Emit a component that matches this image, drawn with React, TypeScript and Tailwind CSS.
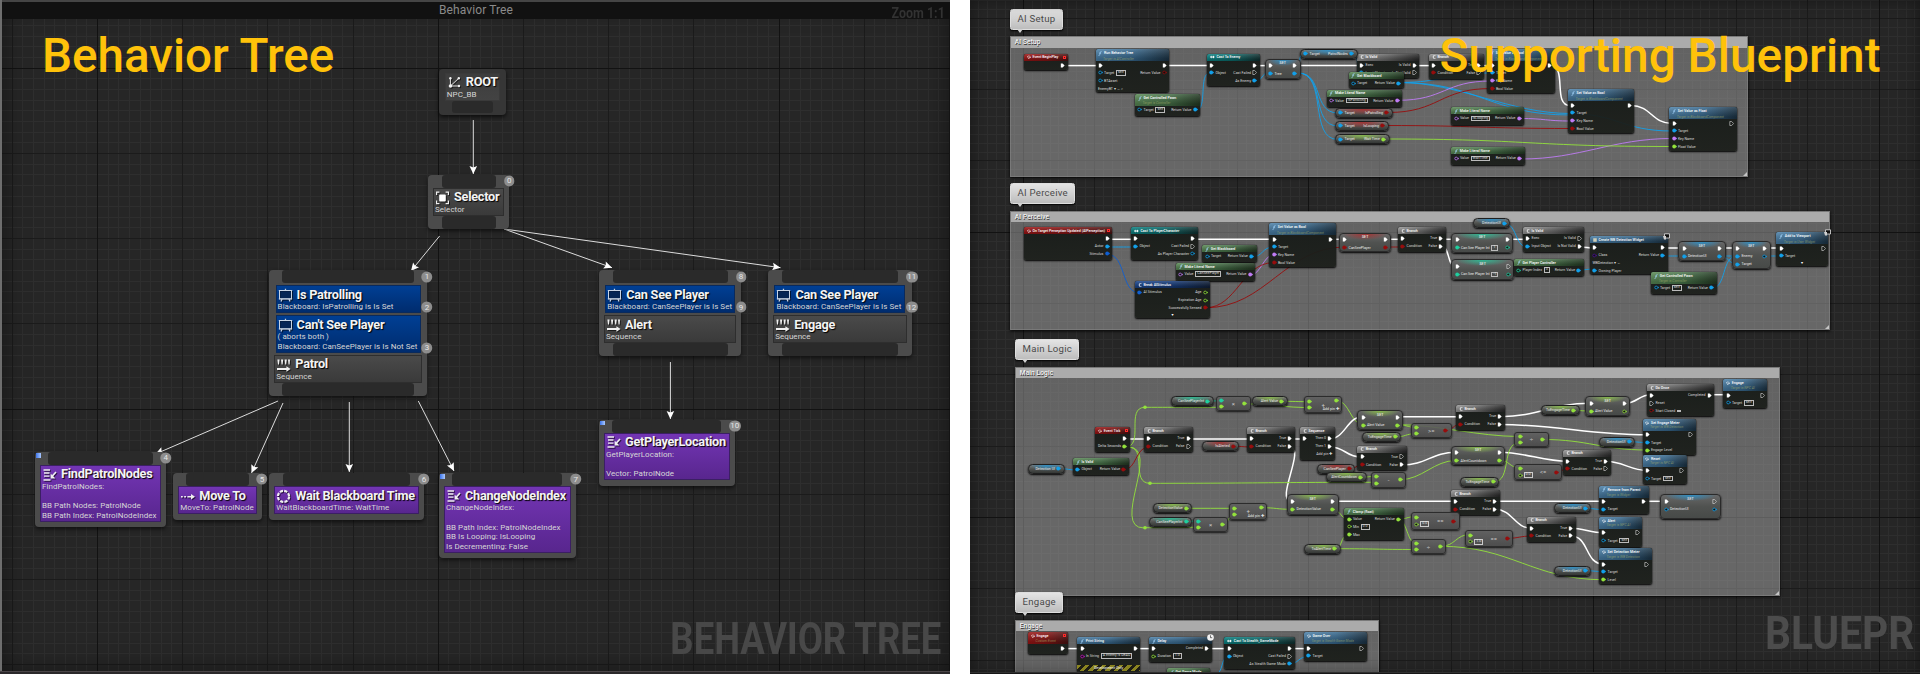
import React from "react";

/* ------------------------------------------------------------------ */
/* Canvas grid                                                         */
/* ------------------------------------------------------------------ */

type GridProps = { w: number; h: number; x0: number; y0: number; step: number; strong: number };

function Grid({ w, h, x0, y0, step, strong }: GridProps) {
  const minor: string[] = [];
  const major: string[] = [];
  const axis: string[] = [];
  const place = (n: number, d: string) => {
    if (n % (strong * 8) === 0) axis.push(d);
    else if (n % 8 === 0) major.push(d);
    else minor.push(d);
  };
  for (let n = -Math.floor(x0 / step); x0 + n * step < w; n++) {
    place(n, `M${Math.floor(x0 + n * step) + 0.5} 0V${h}`);
  }
  for (let n = -Math.floor(y0 / step); y0 + n * step < h; n++) {
    place(n, `M0 ${Math.floor(y0 + n * step) + 0.5}H${w}`);
  }
  return (
    <svg className="absolute inset-0" width={w} height={h} fill="none">
      <path d={minor.join("")} stroke="#2e2e2e" />
      <path d={major.join("")} stroke="#1b1b1b" />
      <path d={axis.join("")} stroke="#121212" />
    </svg>
  );
}

/* ------------------------------------------------------------------ */
/* Behavior tree                                                       */
/* ------------------------------------------------------------------ */

type IconName = "root" | "selector" | "board" | "sequence" | "task" | "move" | "wait";

function TreeIcon({ name }: { name: IconName }) {
  const box = "h-[15px] w-[15px] shrink-0 overflow-visible drop-shadow-[1px_1px_0px_rgba(0,0,0,0.6)]";
  switch (name) {
    case "root":
      return (
        <svg className={box} viewBox="0 0 15 15" fill="none" stroke="#f0f0f0" strokeWidth="0.9">
          <path d="M3.4 4.4V12H11.6M3.4 12L11.6 4.4" />
          <circle cx="3.5" cy="12" r="1.8" fill="#f0f0f0" stroke="none" />
          <circle cx="3.4" cy="4.2" r="1.2" fill="#f0f0f0" stroke="none" />
          <circle cx="11.8" cy="4.2" r="1.2" fill="#f0f0f0" stroke="none" />
          <circle cx="12" cy="12" r="1.2" fill="#f0f0f0" stroke="none" />
        </svg>
      );
    case "selector":
      return (
        <svg className={box} viewBox="0 0 15 15" fill="none" stroke="#f0f0f0" strokeWidth="1.2">
          <path d="M1.6 5V2.2H4.4M10.6 2.2H13.4V5M13.4 10.6V13.6H10.6M4.4 13.6H1.6V10.6" />
          <rect x="4.2" y="4.4" width="6.6" height="7" rx="1" fill="#fff" stroke="none" />
        </svg>
      );
    case "board":
      return (
        <svg className={box} viewBox="0 0 15 15" fill="none" stroke="#c9d4e4" strokeWidth="1">
          <rect x="1.5" y="3.5" width="12" height="8.4" fill="#0a2450" fillOpacity="0.55" />
          <path d="M7.5 1.8V3.5M4 12L3 14.4M11 12L12 14.4" strokeWidth="1.3" />
          <path d="M0.8 3.5H14.2M0.8 11.9H14.2" />
        </svg>
      );
    case "sequence":
      return (
        <svg className={box} viewBox="0 0 15 15" fill="#f0f0f0">
          <path d="M1.4 2.6H3.6L3 7.4H2ZM5 2.6H7.2L6.6 7.4H5.6ZM8.6 2.6H10.8L10.2 7.4H9.2ZM12 2.6H14L13.6 7.4H12.6Z" />
          <path d="M1 11H10.4V9.2L14.6 12L10.4 14.8V13H1Z" />
        </svg>
      );
    case "task":
      return (
        <svg className={box} viewBox="0 0 15 15" fill="none" stroke="#f0f0f0" strokeWidth="1.3">
          <path d="M1.5 3H8M2 6H7.5M2 9.2H7.5M1.5 13H8.5" />
          <path d="M14 5L10.4 9" strokeWidth="1.6" />
          <path d="M8.6 6.4V11.6H13.4Z" fill="#f0f0f0" stroke="none" />
        </svg>
      );
    case "move":
      return (
        <svg className={box} viewBox="0 0 15 15" fill="#f0f0f0">
          <path d="M1 7.9H2.8V9.5H1ZM4.2 7.9H6V9.5H4.2ZM7.4 7.9H11V6L15 8.7L11 11.4V9.5H7.4Z" />
        </svg>
      );
    case "wait":
      return (
        <svg className={box} viewBox="0 0 15 15" fill="none" stroke="#f0f0f0">
          <circle cx="7.5" cy="8.4" r="5.6" strokeWidth="2.2" strokeDasharray="3.2 1.2" />
        </svg>
      );
  }
}

type Block = { kind: "deco" | "comp" | "task" | "root"; icon: IconName; title: string; lines: string[] };
type TreeNodeData = {
  x: number;
  y: number;
  w: number;
  tab: number;
  blocks: Block[];
  badges?: [number, string][];
  leaf?: boolean;
};

const blockStyle = {
  deco: "mx-[6.3px] mb-[2.2px] border-[#0a2a5c] bg-linear-to-b from-[#003f94] to-[#002c6e]",
  comp: "mx-[5px] border-[#2e2e2e] bg-linear-to-b from-[#4a4a4a] to-[#3a3a3a]",
  task: "mx-[5px] border-[#3b1f63] bg-linear-to-b from-[#7335b4] to-[#58268e]",
  root: "mx-[5.5px] mt-[3.5px] border-[#3a3a3a] bg-linear-to-b from-[#3d3d3d] to-[#434343]",
};

function TreeNode({ x, y, w, tab, blocks, badges = [], leaf }: TreeNodeData) {
  const root = blocks[0].kind === "root";
  const deco = blocks[0].kind === "deco";
  return (
    <div
      className={
        root
          ? "absolute flex flex-col items-stretch rounded-[4px] bg-[#363636] pb-[1.5px] shadow-[0_2px_4px_rgba(0,0,0,0.7)]"
          : "absolute flex flex-col items-stretch rounded-[4px] bg-[#4b4b4b] shadow-[0_2px_4px_rgba(0,0,0,0.6)]"
      }
      style={{ left: x, top: y, width: w, paddingBottom: leaf ? 5.4 : undefined }}
    >
      {!root && (
        <div
          className={`h-[13px] self-center rounded-[3px] bg-[#2a2a2a] ${deco ? "mb-[2px]" : "mb-[0.2px]"}`}
          style={{ width: tab }}
        />
      )}
      {blocks.map((b) => (
        <div key={b.title} className={`border pb-[0.4px] ${blockStyle[b.kind]}`}>
          <div className="flex h-[16px] items-center gap-[4px] pl-[1px]">
            <TreeIcon name={b.icon} />
            <span className="-mt-[0.5px] text-[12.7px] leading-[15px] font-bold tracking-[-0.26px] whitespace-nowrap text-[#f4f4f4] [text-shadow:1px_1px_1px_#000]">
              {b.title}
            </span>
          </div>
          {b.lines.map((l, i) => (
            <div key={i} className="h-[9.6px] pl-px text-[8px] leading-[9.6px] tracking-[0.05px] whitespace-pre text-[#d6d6d6]">
              {l}
            </div>
          ))}
        </div>
      ))}
      {!leaf && <div className="h-[12.6px] self-center rounded-[3px] bg-[#2a2a2a]" style={{ width: tab }} />}
      {leaf && blocks[0].icon === "task" && (
        <div className="absolute top-[1px] left-[1px] h-[4.5px] w-[5px] bg-linear-to-r from-[#3f74e8] to-[#a9c8ff]" />
      )}
      {badges.map(([dy, n]) => (
        <div
          key={n}
          className="absolute flex h-[11px] min-w-[10.5px] translate-x-1/2 -translate-y-1/2 items-center justify-center rounded-full bg-[#8d8d8d] px-[1.5px] text-[8px] leading-none text-[#e6e6e6]"
          style={{ right: 0, top: dy }}
        >
          {n}
        </div>
      ))}
    </div>
  );
}

const treeNodes: TreeNodeData[] = [
  { x: 439.3, y: 69.3, w: 66.7, tab: 41.6, blocks: [{ kind: "root", icon: "root", title: "ROOT", lines: ["NPC_BB"] }] },
  {
    x: 428, y: 175, w: 81.3, tab: 54.3, badges: [[5.7, "0"]],
    blocks: [{ kind: "comp", icon: "selector", title: "Selector", lines: ["Selector"] }],
  },
  {
    x: 269.3, y: 270.3, w: 157.7, tab: 131.3, badges: [[6.4, "1"], [37, "2"], [77.7, "3"]],
    blocks: [
      { kind: "deco", icon: "board", title: "Is Patrolling", lines: ["Blackboard: IsPatrolling is Is Set"] },
      { kind: "deco", icon: "board", title: "Can't See Player", lines: ["( aborts both )", "Blackboard: CanSeePlayer is Is Not Set"] },
      { kind: "comp", icon: "sequence", title: "Patrol", lines: ["Sequence"] },
    ],
  },
  {
    x: 599, y: 270.3, w: 142, tab: 115, badges: [[6.4, "8"], [37, "9"]],
    blocks: [
      { kind: "deco", icon: "board", title: "Can See Player", lines: ["Blackboard: CanSeePlayer is Is Set"] },
      { kind: "comp", icon: "sequence", title: "Alert", lines: ["Sequence"] },
    ],
  },
  {
    x: 768.2, y: 270.3, w: 143.5, tab: 116, badges: [[6.4, "11"], [37, "12"]],
    blocks: [
      { kind: "deco", icon: "board", title: "Can See Player", lines: ["Blackboard: CanSeePlayer is Is Set"] },
      { kind: "comp", icon: "sequence", title: "Engage", lines: ["Sequence"] },
    ],
  },
  {
    x: 35, y: 452, w: 130.8, tab: 105.3, leaf: true, badges: [[5.8, "4"]],
    blocks: [{ kind: "task", icon: "task", title: "FindPatrolNodes", lines: ["FindPatrolNodes:", " ", "BB Path Nodes: PatrolNode", "BB Path Index: PatrolNodeIndex"] }],
  },
  {
    x: 173.3, y: 473.3, w: 88.7, tab: 62.6, leaf: true, badges: [[5.8, "5"]],
    blocks: [{ kind: "task", icon: "move", title: "Move To", lines: ["MoveTo: PatrolNode"] }],
  },
  {
    x: 269.3, y: 473.3, w: 154.7, tab: 127.7, leaf: true, badges: [[5.8, "6"]],
    blocks: [{ kind: "task", icon: "wait", title: "Wait Blackboard Time", lines: ["WaitBlackboardTime: WaitTime"] }],
  },
  {
    x: 439, y: 473.3, w: 136.7, tab: 110, leaf: true, badges: [[5.8, "7"]],
    blocks: [{ kind: "task", icon: "task", title: "ChangeNodeIndex", lines: ["ChangeNodeIndex:", " ", "BB Path Index: PatrolNodeIndex", "BB Is Looping: IsLooping", "Is Decrementing: False"] }],
  },
  {
    x: 599, y: 419.8, w: 135.7, tab: 109, leaf: true, badges: [[6, "10"]],
    blocks: [{ kind: "task", icon: "task", title: "GetPlayerLocation", lines: ["GetPlayerLocation:", " ", "Vector: PatrolNode"] }],
  },
];

const treeLinks: [number, number, number, number][] = [
  [473.3, 120, 473.3, 174],
  [439.6, 236, 411, 271],
  [504, 229, 612, 267.7],
  [504, 229, 780.5, 267.7],
  [278, 401, 155.5, 454],
  [283, 403, 251.5, 473],
  [349.3, 402, 349.3, 472],
  [418.3, 401, 454, 471],
  [670.4, 362, 670.4, 419],
];

function BehaviorTreePanel() {
  return (
    <section className="relative h-[674px] w-[950px] shrink-0 overflow-hidden bg-[#262626]">
      <Grid w={950} h={674} x0={438.2} y0={68.2} step={10.65} strong={4} />
      <div className="absolute inset-0 shadow-[inset_0_0_28px_rgba(0,0,0,0.5)]" />
      <header className="relative flex h-[19px] justify-center border-t-2 border-[#454545] bg-[#111111] text-[12px] leading-[17px] text-[#8a8a8a]">
        <span className="pl-[2px] tracking-[0.1px]">Behavior Tree</span>
      </header>
      <div className="absolute top-[4px] right-[5px] origin-right scale-x-[0.89] text-[14px] leading-[19px] font-bold text-[#323232]">
        Zoom 1:1
      </div>
      <div className="absolute right-[9px] bottom-[4px] origin-right scale-x-[0.838] text-[43.5px] leading-[60px] font-bold whitespace-nowrap text-[#484848]">
        BEHAVIOR TREE
      </div>
      <svg className="absolute inset-0" width="950" height="674">
        {treeLinks.map(([x1, y1, x2, y2]) => {
          const a = (Math.atan2(y2 - y1, x2 - x1) * 180) / Math.PI;
          return (
            <g key={`${x1}-${x2}-${y2}`}>
              <line x1={x1} y1={y1} x2={x2} y2={y2} stroke="#dcdcdc" strokeWidth="1" />
              <path d="M0 0L-8 -3.8L-6.6 0L-8 3.8Z" fill="#fff" transform={`translate(${x2} ${y2}) rotate(${a})`} />
            </g>
          );
        })}
      </svg>
      {treeNodes.map((n) => (
        <TreeNode key={`${n.x}-${n.y}`} {...n} />
      ))}
      <h1 className="absolute top-[28px] left-[42px] text-[47.6px] leading-[56px] font-medium whitespace-nowrap text-[#ffc20a]">
        Behavior Tree
      </h1>
      <div className="absolute inset-y-0 left-0 w-[2px] bg-[#6e6e6e]" />
      <div className="absolute inset-x-0 bottom-0 h-[3px] border-t border-[#4a4548] bg-[#2a282a]" />
    </section>
  );
}

/* ------------------------------------------------------------------ */
/* Blueprint graph                                                     */
/* ------------------------------------------------------------------ */

const pinColor: Record<string, string> = {
  B: "#12a0ea",
  R: "#960d0d",
  G: "#93e23c",
  P: "#c07cf5",
  T: "#1fcf9f",
  D: "#0f5fd2",
  V: "#4b1196",
  M: "#c414c0",
};

/** One letter per pin type; upper case is connected, lower case is free. X is execution. */
function Pin({ code }: { code: string }) {
  const up = code.toUpperCase();
  const on = code === up;
  if (!code) return null;
  if (up === "X") {
    return (
      <svg className="h-[5px] w-[5px] shrink-0" viewBox="0 0 5 5">
        <path d="M0.8 0.5H2.6L4.6 2.5L2.6 4.5H0.8Z" fill={on ? "#fff" : "none"} stroke={on ? "none" : "#ddd"} strokeWidth="0.6" />
      </svg>
    );
  }
  const c = pinColor[up];
  return (
    <svg className="h-[5px] w-[5px] shrink-0" viewBox="0 0 5 5">
      <circle cx="2.2" cy="2.5" r={on ? 1.9 : 1.4} fill={on ? c : "#111"} stroke={on ? "none" : c} strokeWidth="0.8" />
      <path d="M4 1.6L5 2.5L4 3.4Z" fill={c} />
    </svg>
  );
}

type Tone = "blue" | "red" | "green" | "teal" | "gray" | "navy";
type Kind = "fn" | "set" | "var" | "op";
type BpNode = [kind: Kind, x: number, y: number, w: number, h: number, tone: Tone, title: string, sub: string, rows: string[]];

const headTone: Record<Tone, string> = {
  blue: "from-[#4c82ab] via-[#386a90] to-[#1c3446]",
  red: "from-[#a01515] via-[#861414] to-[#4a1212]",
  green: "from-[#5b8c57] via-[#48754a] to-[#243a24]",
  teal: "from-[#0b8585] via-[#0a6c6c] to-[#0f3030]",
  gray: "from-[#9a9a9a] via-[#666666] to-[#2a2a2a]",
  navy: "from-[#1b478f] via-[#153a7a] to-[#101f38]",
};

const glowTone: Record<Tone, string> = {
  blue: "from-[#2f8fc4]",
  red: "from-[#a33232]",
  green: "from-[#86b84c]",
  teal: "from-[#2fb892]",
  gray: "from-[#888888]",
  navy: "from-[#1b478f]",
};

function Row({ spec }: { spec: string }) {
  const [lp = "", lt = "", box = "", rp = "", rt = ""] = spec.split("|");
  return (
    <div className="flex h-[7.8px] items-center justify-between px-[2.4px]">
      <div className="flex items-center gap-[1.2px]">
        <Pin code={lp} />
        <span>{lt}</span>
        {box && <span className="ml-[0.5px] border-[0.5px] border-[#bbb] px-[1px] leading-[3.6px]">{box}</span>}
      </div>
      <div className="flex items-center gap-[1.2px]">
        <span>{rt}</span>
        <Pin code={rp} />
      </div>
    </div>
  );
}

function Node({ n }: { n: BpNode }) {
  const [kind, x, y, w, h, tone, title, sub, rows] = n;
  const pos = { left: x, top: y, width: w, height: h };
  if (kind === "fn") {
    return (
      <div
        className="absolute overflow-hidden rounded-[2px] bg-linear-to-b from-[#161a17]/95 to-[#1c1f1b]/95 text-[3.6px] leading-[4px] whitespace-nowrap text-[#dcdcdc] shadow-[0_1px_2px_#000,0_0_1px_#000]"
        style={pos}
      >
        <div className={`bg-linear-to-r ${headTone[tone]} ${sub ? "h-[12px]" : "h-[7.2px]"}`}>
          <div className={`h-full bg-linear-to-b from-white/15 to-black/25 pr-[2px] pl-[2.5px] ${sub ? "pt-[1.6px]" : "pt-[1.4px]"}`}>
            <div className="flex items-center gap-[2px] text-[3.6px] font-medium text-white">
              <HeadGlyph tone={tone} title={title} />
              <span className="grow">{title}</span>
              {tone === "red" && <span className="h-[3px] w-[3px] border-[0.8px] border-[#ff2a2a]" />}
            </div>
            {sub && <div className="pt-[0.8px] pl-[5px] text-[3.4px] font-normal text-[#a5b06e]/70 italic">{sub}</div>}
          </div>
        </div>
        {rows.map((r, i) =>
          r === "v" ? (
            <div key={i} className="pt-[1px] text-center text-[3.6px] leading-[4px] text-white">▼</div>
          ) : r === "!" ? (
            <div
              key={i}
              className="mt-[5px] flex h-[6px] items-center justify-center bg-[repeating-linear-gradient(135deg,#8a8420_0_3px,#1c1c14_3px_6px)] text-white"
            >
              Development Only
            </div>
          ) : (
            <Row key={i} spec={r} />
          ),
        )}
      </div>
    );
  }
  if (kind === "set") {
    return (
      <div
        className="absolute overflow-hidden rounded-[4px] border-[0.7px] border-[#2a2a2a] bg-linear-to-b from-[#686868] via-[#505250] to-[#474a48] pt-[2.4px] text-[3.6px] leading-[4px] whitespace-nowrap text-[#eaeaea] shadow-[0_1px_2px_#000]"
        style={pos}
      >
        <div className={`absolute inset-x-0 top-0 h-[6px] bg-radial-[ellipse_44%_100%_at_50%_0%] ${glowTone[tone]} to-transparent`} />
        <div className="absolute inset-x-0 top-[1.6px] text-center text-[3.6px] font-medium">{title}</div>
        <div className="relative">
          {rows.map((r, i) => (
            <Row key={i} spec={r} />
          ))}
        </div>
      </div>
    );
  }
  if (kind === "var") {
    return (
      <div
        className="absolute flex flex-col justify-center overflow-hidden rounded-[4.5px] border-[0.7px] border-[#1f1f1f] bg-linear-to-b from-[#787878] via-[#50524f] to-[#343735] text-[3.6px] leading-[4px] whitespace-nowrap text-[#eaeaea] shadow-[0_1px_2px_#000]"
        style={pos}
      >
        <div className={`absolute inset-x-0 top-0 h-[6px] bg-radial-[ellipse_48%_100%_at_50%_0%] ${glowTone[tone]} to-transparent`} />
        <div className="relative">
          <Row spec={rows[0]} />
        </div>
      </div>
    );
  }
  return (
    <div
      className="absolute flex justify-between rounded-[3px] border-[0.7px] border-[#2c2c2c] bg-linear-to-b from-[#606060]/90 to-[#4a4a4a]/90 px-[2.2px] text-[3.6px] leading-[4px] text-[#eaeaea] shadow-[0_1px_2px_rgba(0,0,0,0.8)]"
      style={pos}
    >
      <div className="flex flex-col justify-center gap-[1.3px]">
        {rows[0].split(",").map((p, i) => (
          <div key={i} className="flex items-center gap-[1px]">
            <Pin code={p[0]} />
            {p.length > 1 && <span className="border-[0.5px] border-[#ccc] px-[1px] leading-[3.6px]">{p.slice(1)}</span>}
          </div>
        ))}
      </div>
      <div className="flex items-center text-[6px] leading-none text-[#ccc]">{title}</div>
      <div className={`flex flex-col items-end ${sub ? "justify-between py-[1px]" : "justify-center"}`}>
        <Pin code={rows[1]} />
        {sub && <div className="-ml-[14px] whitespace-nowrap">{sub}</div>}
      </div>
    </div>
  );
}

function HeadGlyph({ tone, title }: { tone: Tone; title: string }) {
  if (tone === "red" || ["Engage", "Reset", "Alert", "Game Over", "Set Engage Meter", "Set Detection Meter"].includes(title)) {
    return (
      <svg className="h-[4px] w-[4px]" viewBox="0 0 8 8" fill="none" stroke="#fff" strokeWidth="1.4">
        <path d="M4 0.8L0.8 4L4 7.2L7.2 4M4 4H7.5" />
      </svg>
    );
  }
  if (tone === "teal") {
    return (
      <svg className="h-[4px] w-[5px]" viewBox="0 0 10 8" fill="#fff">
        <path d="M0 3H3V1L6 4L3 7V5H0ZM6 1L9.5 4L6 7Z" />
      </svg>
    );
  }
  if (title.startsWith("Create")) {
    return (
      <svg className="h-[4px] w-[4px]" viewBox="0 0 8 8">
        <path d="M0.5 0.5H7.5V7.5H0.5Z" fill="#cfcfb8" />
      </svg>
    );
  }
  if (tone === "gray" || tone === "navy") {
    return (
      <svg className="h-[4px] w-[4px]" viewBox="0 0 8 8" fill="none" stroke="#fff" strokeWidth="1.2">
        <path d="M1 4H3M3 1.2V6.8M3 1.2H7M3 6.8H7" />
      </svg>
    );
  }
  return (
    <svg className="h-[5px] w-[4px]" viewBox="0 0 8 10" fill="none" stroke="#a8d8ff" strokeWidth="1.4">
      <path d="M7 1.2C5.4 0.6 4.8 1.6 4.5 3L3.4 7.4C3.1 8.8 2.4 9.4 1 8.8M2.4 4.2H6.2" />
    </svg>
  );
}

const TB = "Target is BlackboardComponent";
const pill = (x: number, y: number, w: number, tone: Tone, pin: string, name: string, l = "|"): BpNode => [
  "var", x, y, w, 10, tone, "", "", [`${l}||${pin}|${name}`],
];
const branch = (x: number, y: number, w: number, t = "X", f = "X", name = "Branch"): BpNode => [
  "fn", x, y, w, 24.5, "gray", name, "", [`X|||${t}|True`, `R|Condition||${f}|False`],
];

const nodes: BpNode[] = [
  /* AI Setup */
  ["fn", 1024, 54, 43.5, 16, "red", "Event BeginPlay", "", ["|||X|"]],
  ["fn", 1095.5, 49.3, 73.5, 42.5, "blue", "Run Behavior Tree", "Target is AIController", ["X|||X|", "b|Target|self|r|Return Value", "b|BTAsset|||", "|     EnemyBT ▾   ← ⌕|||"]],
  ["fn", 1135, 94, 65, 22, "green", "Get Controlled Pawn", "Target is Controller", ["b|Target|self|B|Return Value"]],
  ["fn", 1207, 54, 52.7, 32, "teal", "Cast To Enemy", "", ["X|||X|", "B|Object||x|Cast Failed", "|||B|As Enemy"]],
  ["set", 1265, 58.5, 35.5, 20, "blue", "SET", "", ["X|||X|", "B|Tree||B|"]],
  ["fn", 1357, 54, 62, 24, "gray", "Is Valid", "", ["X|Exec||X|Is Valid", "B|Input Object||x|Is Not Valid"]],
  pill(1300, 49, 57.5, "blue", "B", "PatrolNodes", "B|Target"),
  ["fn", 1348.5, 72, 55, 15.7, "green", "Get Blackboard", "", ["b|Target||B|Return Value"]],
  ["fn", 1326.5, 89.5, 75.5, 17.5, "green", "Make Literal Name", "", ["p|Value|IsPatrolling|P|Return Value"]],
  pill(1335, 107.7, 57.7, "red", "R", "IsPatrolling", "B|Target"),
  pill(1335, 120.7, 53.7, "red", "R", "IsLooping", "B|Target"),
  pill(1335, 134.4, 54.5, "green", "G", "Wait Time", "B|Target"),
  branch(1429, 54, 54.7, "X", "x"),
  ["fn", 1487.3, 49.3, 67.5, 43.7, "blue", "Set Value as Bool", TB, ["X|||X|", "B|Target", "P|Key Name", "R|Bool Value"]],
  ["fn", 1568, 89.3, 66, 43.7, "blue", "Set Value as Bool", TB, ["X|||X|", "B|Target", "P|Key Name", "R|Bool Value"]],
  ["fn", 1669.3, 107.3, 67.5, 43.7, "blue", "Set Value as Float", TB, ["X|||x|", "B|Target", "P|Key Name", "G|Float Value"]],
  ["fn", 1451.3, 107.3, 72.7, 17.5, "green", "Make Literal Name", "", ["p|Value|IsLooping|P|Return Value"]],
  ["fn", 1451.3, 147.3, 73.3, 17.5, "green", "Make Literal Name", "", ["p|Value|WaitTime|P|Return Value"]],

  /* AI Perceive */
  ["fn", 1024, 227.3, 88, 32.3, "red", "On Target Perception Updated (AIPerception)", "", ["|||X|", "|||B|Actor", "|||D|Stimulus"]],
  ["fn", 1131, 227.3, 66.7, 32.3, "teal", "Cast To PlayerCharacter", "", ["X|||X|", "B|Object||x|Cast Failed", "|||b|As Player Character"]],
  ["fn", 1202.3, 245.3, 54.3, 16.3, "green", "Get Blackboard", "", ["b|Target||B|Return Value"]],
  ["fn", 1176, 263, 79, 18, "green", "Make Literal Name", "", ["p|Value|CanSeePlayer|P|Return Value"]],
  ["fn", 1135, 281.3, 75, 36.7, "navy", "Break AIStimulus", "", ["D|AI Stimulus||g|Age", "|||g|Expiration Age", "|||R|Successfully Sensed", "v"]],
  ["fn", 1269.3, 223.3, 66.3, 43.7, "blue", "Set Value as Bool", TB, ["X|||X|", "B|Target", "P|Key Name", "R|Bool Value"]],
  ["set", 1339, 232.7, 52.3, 19.3, "red", "SET", "", ["X|||X|", "R|CanSeePlayer||R|"]],
  branch(1398, 227.3, 47.7),
  ["set", 1451.3, 232.7, 61.7, 20.3, "teal", "SET", "", ["X|||X|", "T|Can See Player Int|1|t|"]],
  ["set", 1451.3, 259.3, 62.7, 20.7, "teal", "SET", "", ["X|||x|", "T|Can See Player Int|-1|t|"]],
  pill(1473, 218.3, 37.3, "blue", "B", "DetectionUI"),
  ["fn", 1523, 227.3, 61.3, 24.7, "gray", "Is Valid", "", ["X|Exec||x|Is Valid", "B|Input Object||X|Is Not Valid"]],
  ["fn", 1514, 259, 69.7, 17.3, "green", "Get Player Controller", "", ["t|Player Index|0|B|Return Value"]],
  ["fn", 1590, 236.3, 77.7, 37.7, "blue", "Create WB Detection Widget", "", ["X|||X|", "v|Class||B|Return Value", "|     WBDetection ▾  ←||||", "B|Owning Player"]],
  ["set", 1678.3, 241.3, 47.3, 20, "blue", "SET", "", ["X|||X|", "B|DetectionUI||B|"]],
  ["set", 1732, 241.3, 38.7, 27.3, "blue", "SET", "", ["X|||X|", "B|Enemy||b|", "B|Target"]],
  ["fn", 1776.3, 232.3, 51.7, 33.7, "blue", "Add to Viewport", "Target is User Widget", ["X|||x|", "B|Target", "v"]],
  ["fn", 1651.3, 272, 65.3, 22, "green", "Get Controlled Pawn", "Target is Controller", ["b|Target|self|B|Return Value"]],

  /* Main Logic */
  pill(1171, 396.3, 42.7, "teal", "T", "CanSeePlayerInt"),
  ["op", 1216, 396.3, 34.7, 15, "gray", "×", "", ["T,G", "G"]],
  pill(1252, 396.3, 35.7, "green", "G", "Alert Value"),
  ["op", 1304.3, 396.3, 37.7, 17, "gray", "+", "Add pin ✚", ["G,G", "G"]],
  ["set", 1357.3, 410.3, 46, 19.3, "green", "SET", "", ["X|||X|", "G|Alert Value||G|"]],
  pill(1362, 432, 39.3, "green", "G", "ToEngageTime"),
  ["fn", 1095.3, 427.3, 34.3, 24.7, "red", "Event Tick", "", ["|||X|", "|||G|Delta Seconds"]],
  branch(1144, 427.3, 49, "X", "x"),
  branch(1247, 427.3, 47.7),
  ["fn", 1300, 427.3, 34.7, 32.7, "gray", "Sequence", "", ["X|||X|Then 0", "|||X|Then 1", "||||Add pin ✚"]],
  pill(1202, 441.3, 37.3, "red", "R", "IsAlerted"),
  branch(1357.3, 445.7, 49.3, "x", "X"),
  ["fn", 1073, 458.3, 55.7, 16.7, "green", "Is Valid", "", ["B|Object||R|Return Value"]],
  pill(1028.3, 463.7, 36.3, "blue", "B", "Detection UI"),
  pill(1317.3, 463.7, 38, "red", "R", "CanSeePlayer"),
  pill(1326, 472.3, 40.7, "green", "G", "AlertCountdown"),
  ["op", 1371.3, 472.3, 34.7, 15.3, "gray", "-", "", ["G,G", "G"]],
  ["set", 1287, 494.3, 51.7, 20.3, "green", "SET", "", ["X|||X|", "G|DetectionValue||G|"]],
  ["fn", 1344.3, 508, 59.3, 32, "green", "Clamp (float)", "", ["G|Value||G|Return Value", "g|Min|0.0||", "G|Max"]],
  pill(1153.3, 503.3, 39, "green", "G", "DetectionValue"),
  pill(1149, 517, 43, "teal", "T", "CanSeePlayerInt"),
  ["op", 1193.3, 517, 34.7, 15.3, "gray", "×", "", ["T,G", "G"]],
  ["op", 1229.3, 503.3, 37.7, 16.3, "gray", "+", "Add pin ✚", ["G,G", "G"]],
  pill(1304, 543.7, 36.7, "green", "G", "ToAlertTime"),
  ["op", 1411, 423.3, 40.6, 14.7, "gray", ">=", "", ["G,G", "R"]],
  branch(1456, 405.3, 48.7),
  pill(1541, 405.3, 38.6, "green", "G", "ToEngageTime"),
  ["set", 1585.4, 396.3, 44.6, 19.7, "green", "SET", "", ["X|||X|", "G|Alert Value||g|"]],
  ["fn", 1647, 384.3, 67, 31.7, "gray", "Do Once", "", ["X|||X|Completed", "x|Reset", "r|Start Closed| |"]],
  ["fn", 1723.3, 379.3, 43.6, 28.7, "blue", "Engage", "Target is NPC AI", ["X|||x|", "b|Target|self||"]],
  ["op", 1514.4, 432.3, 34.2, 14.3, "gray", "÷", "", ["G,G", "G"]],
  pill(1599, 436.7, 36, "blue", "B", "DetectionUI"),
  ["fn", 1642.5, 419, 53, 36, "blue", "Set Engage Meter", "Target is WB Detection", ["X|||x|", "B|Target", "G|Engage Level"]],
  ["set", 1451, 445.7, 54.4, 19.3, "green", "SET", "", ["X|||X|", "G|AlertCountdown||G|"]],
  ["op", 1514.4, 463.7, 47.7, 16.7, "gray", "<=", "", ["G,g0.0", "R"]],
  branch(1563, 450, 47.7, "X", "x"),
  ["fn", 1642.5, 455, 44.3, 29, "blue", "Reset", "Target is NPC AI", ["X|||x|", "b|Target|self||"]],
  pill(1460, 477, 39, "green", "G", "ToEngageTime"),
  branch(1451, 490.3, 48.7),
  ["fn", 1599, 485.7, 49.7, 28.3, "blue", "Remove from Parent", "Target is Widget", ["X|||X|", "B|Target"]],
  ["set", 1660.4, 494.3, 60.2, 25, "blue", "SET", "", ["X|||x|", "b|DetectionUI||b|"]],
  pill(1554, 503.3, 37, "blue", "B", "DetectionUI"),
  ["op", 1411, 512.3, 48.6, 17.7, "gray", "==", "", ["G,g0.0", "R"]],
  branch(1527, 517, 48.7),
  ["fn", 1599, 517, 43.3, 30, "blue", "Alert", "Target is NPC AI", ["X|||x|", "b|Target|self||"]],
  ["op", 1411, 539.3, 35, 14.7, "gray", "÷", "", ["G,G", "G"]],
  ["op", 1465, 530.3, 47.7, 16.7, "gray", "==", "", ["G,g1.0", "R"]],
  pill(1554, 565.7, 37, "blue", "B", "DetectionUI"),
  ["fn", 1599, 548.3, 52.7, 35.7, "blue", "Set Detection Meter", "Target is WB Detection", ["X|||x|", "B|Target", "G|Level"]],

  /* Engage */
  ["fn", 1028, 632.3, 39.7, 21.7, "red", "Engage", "Custom Event", ["|||X|"]],
  ["fn", 1077.3, 637.3, 62.7, 34.4, "blue", "Print String", "", ["X|||X|", "m|In String|A enemy is DEAD||", "!"]],
  ["fn", 1149, 637.3, 62.7, 24.7, "blue", "Delay", "", ["X|||X|Completed", "g|Duration|1.0||"]],
  ["fn", 1224.3, 637.3, 70.3, 31.3, "teal", "Cast To Stealth_GameMode", "", ["X|||X|", "B|Object||x|Cast Failed", "|||B|As Stealth Game Mode"]],
  ["fn", 1304, 632.3, 62.7, 28.7, "blue", "Game Over", "Target is Stealth Game Mode", ["X|||x|", "B|Target"]],
  ["fn", 1167, 668.3, 42.7, 8, "green", "Get Game Mode", "", []],
];

/** Wire: type, start, end, and an optional length for the horizontal handles. */
type Wire = [t: string, x1: number, y1: number, x2: number, y2: number, k?: number];
const wires: Wire[] = [
  ["X", 1065, 65.6, 1097, 65.6], ["X", 1167, 65.6, 1208, 65.6], ["X", 1256, 65.6, 1268, 65.6], ["X", 1297, 65.6, 1361, 65.6],
  ["X", 1416, 65.6, 1432, 65.6], ["X", 1481, 65.6, 1490, 65.6], ["X", 1550, 65.6, 1570, 105.5, 18], ["X", 1631, 105.5, 1672, 123.5],
  ["B", 1196, 110, 1210, 73, 12], ["B", 1256, 81, 1268, 73], ["B", 1296, 73, 1303, 54, 6], ["B", 1354, 54, 1361, 73, 6],
  ["B", 1298, 73, 1338, 113, 26], ["B", 1298, 73, 1338, 126, 28], ["B", 1298, 73, 1338, 139.5, 30],
  ["B", 1399, 82.5, 1490, 73], ["B", 1399, 82.5, 1570, 113.5, 60], ["B", 1399, 82.5, 1570, 115, 80], ["B", 1568, 113.5, 1672, 131, 50],
  ["P", 1398, 100.3, 1491, 81], ["P", 1520, 118.5, 1571, 121], ["P", 1521, 159, 1672, 138.5, 60],
  ["R", 1388, 112.5, 1491, 88.5], ["R", 1385, 125.5, 1571, 128.5], ["G", 1386, 139, 1672, 146.5],

  ["X", 1108, 239.3, 1134, 239.3], ["X", 1193, 239.3, 1272, 239.3], ["X", 1332, 239.3, 1344, 239.3], ["X", 1387, 239.3, 1401, 239.3],
  ["X", 1442, 239.3, 1455, 239.3], ["X", 1442, 247, 1455, 265.7, 8], ["X", 1509, 239.3, 1526, 239.3], ["X", 1580, 247, 1594, 248],
  ["X", 1664, 248, 1682, 248], ["X", 1722, 248, 1736, 248], ["X", 1766, 248, 1780, 248],
  ["B", 1108, 247, 1134, 247], ["D", 1108, 254.7, 1139, 292.7, 18], ["B", 1252, 257, 1273, 247], ["P", 1251, 275, 1273, 255, 9],
  ["R", 1206, 307.7, 1273, 262.7, 30], ["R", 1206, 307.7, 1345, 247, 60], ["R", 1386, 247, 1402, 247],
  ["B", 1505, 223.7, 1527, 247, 12], ["B", 1578, 270, 1595, 269], ["B", 1662, 256, 1683, 256], ["B", 1720, 256, 1737, 264],
  ["B", 1720, 256, 1737, 256], ["B", 1764, 256, 1781, 256], ["B", 1711, 288.7, 1737, 256, 16],

  ["T", 1208, 401.3, 1220, 400.7], ["G", 1244, 403.7, 1309, 407.7, 20], ["G", 1282, 401.3, 1309, 401.7],
  ["G", 1337, 400.7, 1363, 424.6, 12], ["X", 1330, 439, 1362, 416.7, 14], ["X", 1330, 447, 1361, 457],
  ["X", 1125, 439, 1148, 439], ["X", 1189, 439, 1251, 439], ["X", 1289, 439, 1304, 439], ["X", 1290, 447, 1291, 501, 16],
  ["G", 1125, 447, 1145, 407.3, 20], ["G", 1145, 407.3, 1220, 407.3], ["G", 1128, 447, 1150, 483.3, 20],
  ["G", 1150, 483.3, 1376, 482.3], ["G", 1128, 447, 1144, 528, 34], ["G", 1145, 527.7, 1198, 527.3],
  ["B", 1060, 468.7, 1077, 470], ["R", 1123, 470, 1149, 447, 14], ["R", 1234, 446.3, 1252, 447],
  ["R", 1350, 468.7, 1362, 465], ["G", 1361, 477.3, 1376, 476.3], ["G", 1400, 479.7, 1456, 460.5, 22],
  ["G", 1187, 508.3, 1234, 508.3], ["T", 1186, 522, 1198, 520.7], ["G", 1223, 524.5, 1234, 514.3], ["G", 1262, 507.7, 1291, 509.3],
  ["G", 1333, 509.3, 1348, 519], ["G", 1335, 548.7, 1348, 535.3, 8], ["G", 1336, 548.7, 1416, 549.5],
  ["X", 1334, 501.3, 1456, 501.3], ["X", 1398, 416.7, 1460, 416.7], ["X", 1402, 465, 1456, 452.3, 24],
  ["G", 1397, 424.6, 1416, 427.3], ["G", 1397, 424.6, 1519, 436.5, 40], ["G", 1395, 437, 1416, 433.7],
  ["R", 1446, 430.3, 1460, 424.6], ["X", 1500, 416.7, 1590, 403.3, 40], ["X", 1500, 424.6, 1647, 434.7, 60],
  ["G", 1574, 410.5, 1591, 411], ["X", 1625, 403.3, 1651, 394.7, 12], ["X", 1709, 394.7, 1728, 394.7],
  ["G", 1543, 439.5, 1647, 450, 45], ["B", 1629, 441.7, 1647, 442.5], ["X", 1500, 452.3, 1568, 461.3, 25],
  ["G", 1500, 460.3, 1519, 467.7], ["G", 1494, 481.7, 1519, 443, 18], ["R", 1556, 471.7, 1568, 469],
  ["X", 1606, 461.3, 1647, 470.5, 16], ["X", 1496, 501.3, 1603, 501.3], ["B", 1585, 508.3, 1603, 509.5],
  ["X", 1644, 501.3, 1666, 501.3], ["X", 1495, 509.3, 1532, 528.3, 18], ["X", 1571, 528.3, 1603, 532.7, 12],
  ["X", 1571, 536, 1603, 564, 18], ["G", 1398, 519, 1416, 516.7], ["G", 1398, 519, 1416, 543.5, 9],
  ["R", 1453, 520.5, 1457, 509.5, 3], ["G", 1441, 546.3, 1470, 534.5, 14], ["G", 1441, 546.3, 1603, 579.7, 70],
  ["R", 1507, 538.3, 1532, 536], ["B", 1585, 570.7, 1603, 571.5],

  ["X", 1063, 648.6, 1081, 648.6], ["X", 1136, 648.6, 1153, 648.6], ["X", 1207, 648.6, 1229, 648.6], ["X", 1290, 648.6, 1308, 648.6],
  ["B", 1215, 674, 1229, 656.5, 9], ["B", 1289, 664, 1308, 656.5],
];

type Comment = { title: string; x: number; y: number; w: number; h: number; bubble: number };
const comments: Comment[] = [
  { title: "AI Setup", x: 1010.3, y: 36, w: 738, h: 141, bubble: 52.5 },
  { title: "AI Perceive", x: 1010.3, y: 210.5, w: 819.7, h: 119.5, bubble: 65 },
  { title: "Main Logic", x: 1015.3, y: 366.5, w: 764.5, h: 229.3, bubble: 63.7 },
  { title: "Engage", x: 1015.3, y: 619.5, w: 363.7, h: 60, bubble: 47.7 },
];

function CommentBox({ title, x, y, w, h, bubble }: Comment) {
  return (
    <div className="absolute" style={{ left: x - 970, top: y, width: w, height: h }}>
      <div className="flex h-full flex-col border border-[#858585]/60 bg-[#a8a8a8]/50 shadow-[0_1px_3px_#000]">
        <div className="h-[10.5px] bg-[#ababab] pl-[3.5px] text-[6.6px] leading-[11px] font-medium tracking-[0.1px] text-[#f2f2f2] [text-shadow:0.6px_0.6px_0.6px_#333]">
          {title}
        </div>
        <div className="grow bg-linear-to-b from-[#505050]/20 via-transparent to-transparent" />
      </div>
      <div
        className="absolute -top-[27.5px] left-0 flex h-[21.3px] items-center rounded-[2.5px] border border-[#dedede] bg-linear-to-b from-[#e4e4e4] to-[#bdbdbd] pl-[6.3px] text-[9.6px] tracking-[0.25px] whitespace-nowrap text-[#4a4a4a] shadow-[0_1px_2px_#000]"
        style={{ width: bubble }}
      >
        {title}
        <div className="absolute top-full left-[6px] h-0 w-0 border-x-[3px] border-t-[4px] border-x-transparent border-t-[#d2d2d2]" />
      </div>
      <svg className="absolute right-[1px] bottom-[1px]" width="4" height="4">
        <path d="M4 0V4H0Z" fill="#c4c4c4" />
      </svg>
    </div>
  );
}

function Wires() {
  return (
    <svg className="absolute inset-0" width="950" height="674" viewBox="970 0 950 674" fill="none">
      {wires.map(([t, x1, y1, x2, y2, k], i) => {
        const c = k ?? Math.abs(x2 - x1) / 2;
        return (
          <path
            key={i}
            d={`M${x1} ${y1}C${x1 + c} ${y1} ${x2 - c} ${y2} ${x2} ${y2}`}
            stroke={t === "X" ? "#fff" : pinColor[t]}
            strokeWidth={t === "X" ? 1.5 : 0.9}
          />
        );
      })}
      <g fill="#93e23c">
        <circle cx="1145" cy="407.3" r="1.8" />
        <circle cx="1150" cy="483.3" r="1.8" />
        <circle cx="1145" cy="527.8" r="1.8" />
      </g>
    </svg>
  );
}

function BlueprintPanel() {
  return (
    <section className="relative h-[674px] w-[950px] shrink-0 overflow-hidden bg-[#262626]">
      <Grid w={950} h={674} x0={53.3} y0={232.3} step={8.917} strong={4} />
      {comments.map((c) => (
        <CommentBox key={c.title} {...c} />
      ))}
      <div className="absolute inset-0 shadow-[inset_0_0_18px_rgba(0,0,0,0.45)]" />
      <Wires />
      <div className="absolute top-0 -left-[970px]">
        {nodes.map((n, i) => (
          <Node key={i} n={n} />
        ))}
        <ClientBadge x={1663} y={233} />
        <ClientBadge x={1824} y={228.5} />
        <svg className="absolute" style={{ left: 1207, top: 634 }} width="7" height="7" viewBox="0 0 7 7">
          <circle cx="3.5" cy="3.5" r="3.3" fill="#f2f2f2" />
          <path d="M3.5 1.3V3.7H5.2" fill="none" stroke="#333" strokeWidth="0.7" />
        </svg>
      </div>
      <div className="absolute top-[603px] left-[795px] origin-left scale-x-[0.865] text-[47px] leading-[60px] font-bold whitespace-nowrap text-[#4c4c4c]">
        BLUEPR
      </div>
      <h1 className="absolute top-[28px] left-[469.5px] text-[47.8px] leading-[56px] font-medium whitespace-nowrap text-[#ffc20a]">
        Supporting Blueprint
      </h1>
      <div className="absolute inset-x-0 bottom-0 h-[2.5px] border-t border-[#303030] bg-[#161616]" />
    </section>
  );
}

function ClientBadge({ x, y }: { x: number; y: number }) {
  return (
    <svg className="absolute" style={{ left: x, top: y }} width="7" height="7" viewBox="0 0 7 7">
      <path d="M1.5 0.8H6.5V5H1.5Z" fill="#111" stroke="#e6e6e6" strokeWidth="0.8" />
      <path d="M0 3H3V6.5H1Z" fill="#d0d0d0" />
    </svg>
  );
}

export default function App() {
  return (
    <main className="flex h-[674px] w-[1920px] justify-between overflow-hidden bg-white font-['Roboto',sans-serif]">
      <BehaviorTreePanel />
      <BlueprintPanel />
    </main>
  );
}
